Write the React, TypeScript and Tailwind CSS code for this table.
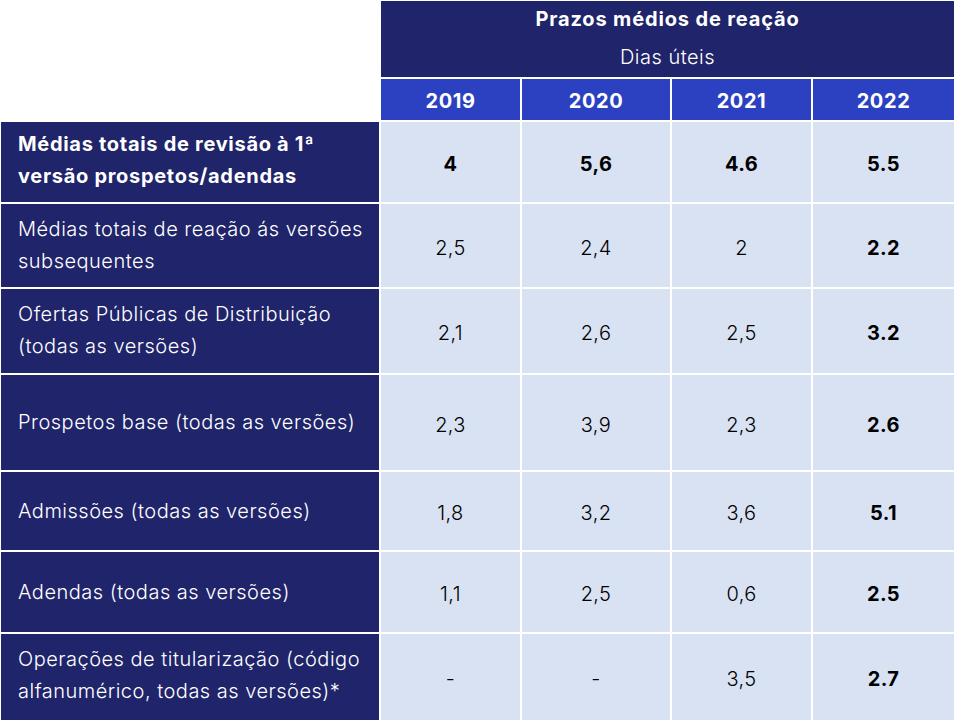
import { Fragment } from "react";

const rows: { label: string; values: string[]; bold?: boolean; h: string; pad: string }[] = [
  { label: "Médias totais de revisão à 1ª versão prospetos/adendas", values: ["4", "5,6", "4.6", "5.5"], bold: true, h: "h-[80px]", pad: "pb-[5px]" },
  { label: "Médias totais de reação ás versões subsequentes", values: ["2,5", "2,4", "2", "2.2"], h: "h-[83px]", pad: "pb-[1px]" },
  { label: "Ofertas Públicas de Distribuição (todas as versões)", values: ["2,1", "2,6", "2,5", "3.2"], h: "h-[84px]", pad: "pb-[2px]" },
  { label: "Prospetos base (todas as versões)", values: ["2,3", "3,9", "2,3", "2.6"], h: "h-[95px]", pad: "pb-[1px]" },
  { label: "Admissões (todas as versões)", values: ["1,8", "3,2", "3,6", "5.1"], h: "h-[78px]", pad: "pb-[1px]" },
  { label: "Adendas (todas as versões)", values: ["1,1", "2,5", "0,6", "2.5"], h: "h-[80px]", pad: "pb-[1px]" },
  { label: "Operações de titularização (código alfanumérico, todas as versões)*", values: ["-", "-", "3,5", "2.7"], h: "h-[86px]", pad: "pb-[5px] leading-[30px]" },
];

const years = ["2019", "2020", "2021", "2022"];

export default function App() {
  return (
    <div className="min-h-screen bg-white pl-[1px] pt-[1px] font-['Inter',sans-serif]">
      <div className="grid grid-cols-[378px_139px_148px_139px_141px] gap-[2px]">
        {/* Header */}
        <div className="row-span-2" />
        <div className="col-span-4 flex h-[76px] flex-col items-center bg-[#20246a] text-white">
          <div className="mt-[5px] text-[20px] font-bold leading-[26px] tracking-[0.85px]">Prazos médios de reação</div>
          <div className="mt-[12px] text-[20px] font-light leading-[26px] tracking-[0.5px]">Dias úteis</div>
        </div>
        {years.map((y) => (
          <div key={y} className="flex h-[41px] items-center justify-center bg-[#2c41c1] pt-[3px] text-[20px] font-bold tracking-[0.6px] text-white">
            {y}
          </div>
        ))}

        {/* Rows */}
        {rows.map((r) => (
          <Fragment key={r.label}>
            <div
              className={`flex ${r.h} items-center bg-[#20246a] pl-[17px] pr-3 text-[20px] leading-[32px] text-white ${r.pad} ${r.bold ? "font-bold tracking-[0.7px]" : "font-light tracking-[0.5px]"}`}
            >
              {r.label}
            </div>
            {r.values.map((v, i) => (
              <div
                key={i}
                className={`flex items-center justify-center bg-[#d9e2f3] pt-[4px] text-[20px] tracking-[0.4px] text-black ${r.bold || i === 3 ? "font-bold" : "font-light"}`}
              >
                {v}
              </div>
            ))}
          </Fragment>
        ))}
      </div>
    </div>
  );
}
